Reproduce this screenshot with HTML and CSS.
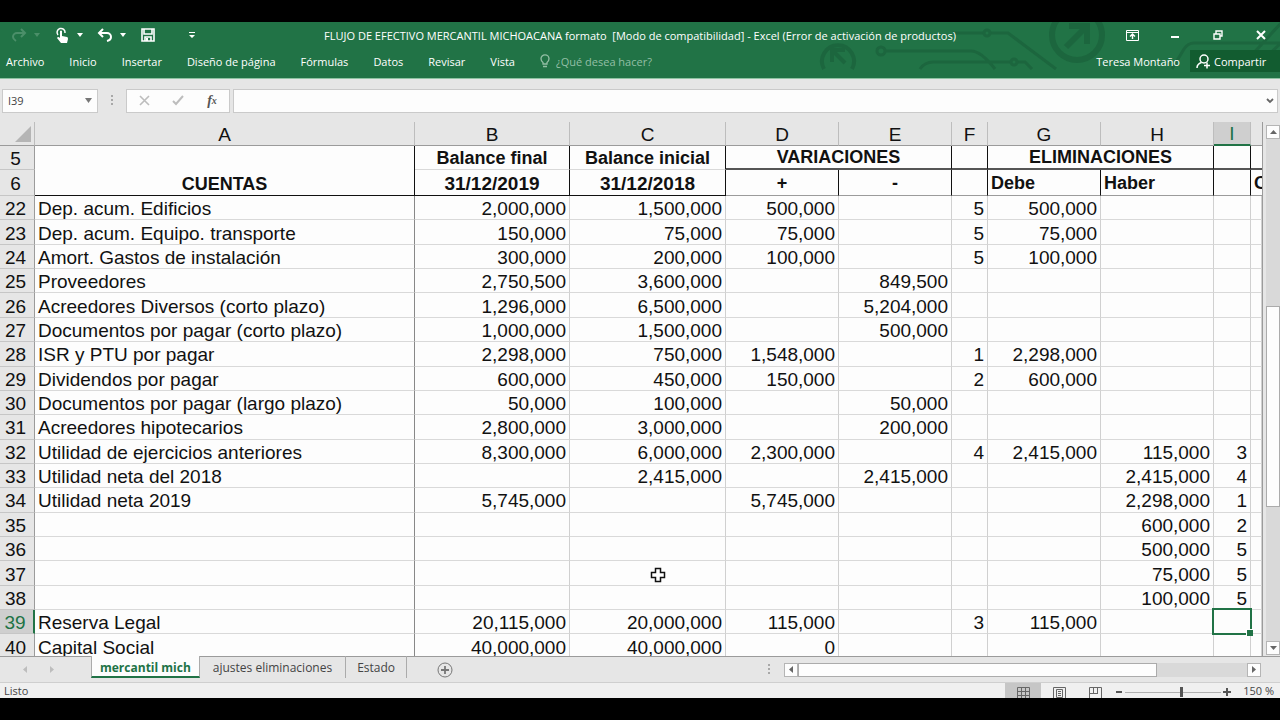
FILE: index.html
```html
<!DOCTYPE html>
<html lang="es">
<head>
    <meta charset="UTF-8">
    <title>FLUJO DE EFECTIVO MERCANTIL MICHOACANA - Excel</title>
    <link rel="stylesheet" href="styles.css">
</head>
<body>
<header class="ribbon">
    <svg class="circuit" width="470" height="48" viewBox="810 22 470 48" fill="none" stroke="#1c663e" stroke-width="3">
        <path d="M824 69a16 16 0 1 1 28 0" stroke-width="4"/>
        <path d="M845 63l-12-12M832 62V50h13" stroke-width="4"/>
        <path d="M953 33h31M991 33h17l48 36"/>
        <circle cx="987" cy="33" r="3"/>
        <circle cx="881" cy="51" r="4"/>
        <path d="M885 51h86q10 0 24 18M920 69q5-7 13-7h77M1017 62h8l7 7"/>
        <circle cx="1014" cy="62" r="3"/>
        <circle cx="1077" cy="35" r="25" stroke-width="6"/>
        <path d="M1066 47l20-20M1069 26h18v18" stroke-width="6"/>
        <path d="M1172 69l12-20q4-6 10-6h86M1238 70l44-48M1252 70l28-26"/>
    </svg>
    <div class="titlebar">
        <div class="quick">
            <button class="split off" aria-label="Rehacer">
                <svg class="ico" width="16" height="16" viewBox="0 0 16 16" fill="none" stroke="currentColor" stroke-width="2"><path d="M14 6H6a4 4 0 0 0-4 4q0 2 3 4M10 2l4 4-4 4"/></svg>
                <svg class="caret" width="6" height="4" viewBox="0 0 6 4"><path d="M0 0h6L3 4z"/></svg>
            </button>
            <button class="split" aria-label="Modo táctil">
                <svg class="ico" width="16" height="16" viewBox="0 0 16 16"><path d="M4 8a4 4 0 1 1 7-2" fill="none" stroke="currentColor" stroke-width="1.5"/><path d="M6 4q1-1 2 0v5l5 1q1 0 1 2l-1 4H7l-4-5q1-2 3 0z" fill="currentColor"/></svg>
                <svg class="caret" width="6" height="4" viewBox="0 0 6 4"><path d="M0 0h6L3 4z"/></svg>
            </button>
            <button class="split" aria-label="Deshacer">
                <svg class="ico" width="16" height="16" viewBox="0 0 16 16" fill="none" stroke="currentColor" stroke-width="2"><path d="M2 6h8a4 4 0 0 1 4 4q0 3-4 4M6 2L2 6l4 4"/></svg>
                <svg class="caret" width="6" height="4" viewBox="0 0 6 4"><path d="M0 0h6L3 4z"/></svg>
            </button>
            <button class="save" aria-label="Guardar">
                <svg width="14" height="14" viewBox="0 0 14 14"><path d="M1 1h12v12H1z M3 1v5h8V1 M4 13V9h6v4" fill="none" stroke="currentColor" stroke-width="1.6"/><path d="M5 10h2v3H5z" fill="currentColor"/></svg>
            </button>
            <button class="more" aria-label="Personalizar barra">
                <svg width="6" height="7" viewBox="0 0 6 7" fill="currentColor"><path d="M0 0h6v1H0zM0 3h6L3 6z"/></svg>
            </button>
        </div>
        <h1 class="title">FLUJO DE EFECTIVO MERCANTIL MICHOACANA formato&nbsp; [Modo de compatibilidad] - Excel (Error de activación de productos)</h1>
        <div class="window-buttons">
            <button aria-label="Opciones de cinta"><svg width="13" height="11" viewBox="0 0 13 11" fill="none" stroke="currentColor"><path d="M.5.5h12v10H.5zM1 2.500h11"/><path d="M6.500 9V4M4 6.500L6.500 4 9 6.500" stroke-width="1.400"/></svg></button>
            <button aria-label="Minimizar"><svg width="10" height="10" viewBox="0 0 10 10" fill="currentColor"><path d="M1 6h8v2H1z"/></svg></button>
            <button aria-label="Restaurar"><svg width="10" height="10" viewBox="0 0 10 10" fill="none" stroke="currentColor" stroke-width="1.400"><path d="M1 4h6v5H1zM3 4V1h6v5H7"/></svg></button>
            <button aria-label="Cerrar"><svg width="10" height="10" viewBox="0 0 10 10" stroke="currentColor" stroke-width="2"><path d="M1 1l8 8M9 1L1 9"/></svg></button>
        </div>
    </div>
    <div class="menu">
        <nav class="menu-tabs">
            <a href="#">Archivo</a>
            <a href="#">Inicio</a>
            <a href="#">Insertar</a>
            <a href="#">Diseño de página</a>
            <a href="#">Fórmulas</a>
            <a href="#">Datos</a>
            <a href="#">Revisar</a>
            <a href="#">Vista</a>
            <a href="#" class="tell">
                <svg width="10" height="14" viewBox="0 0 10 14" fill="none" stroke="currentColor" stroke-width="1.300"><path d="M3 10V8.500Q1 7 1 4.800a4 4 0 0 1 8 0Q9 7 7 8.500V10zM3 12.500h4"/></svg>
                ¿Qué desea hacer?
            </a>
        </nav>
        <div class="account">
            <span>Teresa Montaño</span>
            <button class="share">
                <svg width="15" height="15" viewBox="0 0 15 15" fill="none" stroke="currentColor" stroke-width="1.500"><circle cx="8" cy="5" r="4"/><path d="M1 14q0-4 4.500-5.500M8 11.500h6M11 8.500v6"/></svg>
                Compartir
            </button>
        </div>
    </div>
</header>

<div class="formula-bar">
    <div class="name-box">
        <input type="text" value="I39" aria-label="Cuadro de nombres">
        <button aria-label="Lista de nombres"><svg width="7" height="5" viewBox="0 0 7 5" fill="#777"><path d="M0 0h7L3.500 5z"/></svg></button>
    </div>
    <span class="dots"></span>
    <div class="fx-buttons">
        <button aria-label="Cancelar"><svg width="11" height="11" viewBox="0 0 11 11" stroke="#bdbdbd" stroke-width="1.600"><path d="M1 1l9 9M10 1l-9 9"/></svg></button>
        <button aria-label="Introducir"><svg width="12" height="11" viewBox="0 0 12 11" fill="none" stroke="#bdbdbd" stroke-width="2"><path d="M1 6l3 3 7-8"/></svg></button>
        <button class="fx" aria-label="Insertar función">f<sub>x</sub></button>
    </div>
    <div class="formula">
        <input type="text" aria-label="Barra de fórmulas">
        <button aria-label="Expandir barra"><svg width="8" height="6" viewBox="0 0 8 6" fill="none" stroke="#666" stroke-width="1.800"><path d="M1 1l3 3 3-3"/></svg></button>
    </div>
</div>

<main class="sheet">
    <div class="cells">
        <table>
            <colgroup>
                <col class="c-row"><col class="c-a"><col class="c-b"><col class="c-c"><col class="c-d"><col class="c-d"><col class="c-f"><col class="c-d"><col class="c-d"><col class="c-i"><col>
            </colgroup>
            <thead>
                <tr class="letters"><th class="corner"><svg width="16" height="16" viewBox="0 0 16 16" fill="#b5b5b5"><path d="M16 0v16H0z"/></svg></th><th>A</th><th>B</th><th>C</th><th>D</th><th>E</th><th>F</th><th>G</th><th>H</th><th class="on">I</th><th></th></tr>
                <tr class="frozen"><th scope="row">5</th><td rowspan="2" class="cuentas">CUENTAS</td><td class="soft">Balance final</td><td class="soft">Balance inicial</td><td colspan="2">VARIACIONES</td><td></td><td colspan="2">ELIMINACIONES</td><td></td><td></td></tr>
                <tr class="frozen last"><th scope="row">6</th><td class="dark">31/12/2019</td><td class="dark">31/12/2018</td><td>+</td><td>-</td><td></td><td class="left">Debe</td><td class="left">Haber</td><td></td><td class="left">C</td></tr>
            </thead>
            <tbody>
                <tr><th scope="row">22</th><td>Dep. acum. Edificios</td><td>2,000,000</td><td>1,500,000</td><td>500,000</td><td></td><td>5</td><td>500,000</td><td></td><td></td><td></td></tr>
                <tr><th scope="row">23</th><td>Dep. acum. Equipo. transporte</td><td>150,000</td><td>75,000</td><td>75,000</td><td></td><td>5</td><td>75,000</td><td></td><td></td><td></td></tr>
                <tr><th scope="row">24</th><td>Amort. Gastos de instalación</td><td>300,000</td><td>200,000</td><td>100,000</td><td></td><td>5</td><td>100,000</td><td></td><td></td><td></td></tr>
                <tr><th scope="row">25</th><td>Proveedores</td><td>2,750,500</td><td>3,600,000</td><td></td><td>849,500</td><td></td><td></td><td></td><td></td><td></td></tr>
                <tr><th scope="row">26</th><td>Acreedores Diversos (corto plazo)</td><td>1,296,000</td><td>6,500,000</td><td></td><td>5,204,000</td><td></td><td></td><td></td><td></td><td></td></tr>
                <tr><th scope="row">27</th><td>Documentos por pagar (corto plazo)</td><td>1,000,000</td><td>1,500,000</td><td></td><td>500,000</td><td></td><td></td><td></td><td></td><td></td></tr>
                <tr><th scope="row">28</th><td>ISR y PTU por pagar</td><td>2,298,000</td><td>750,000</td><td>1,548,000</td><td></td><td>1</td><td>2,298,000</td><td></td><td></td><td></td></tr>
                <tr><th scope="row">29</th><td>Dividendos por pagar</td><td>600,000</td><td>450,000</td><td>150,000</td><td></td><td>2</td><td>600,000</td><td></td><td></td><td></td></tr>
                <tr><th scope="row">30</th><td>Documentos por pagar (largo plazo)</td><td>50,000</td><td>100,000</td><td></td><td>50,000</td><td></td><td></td><td></td><td></td><td></td></tr>
                <tr><th scope="row">31</th><td>Acreedores hipotecarios</td><td>2,800,000</td><td>3,000,000</td><td></td><td>200,000</td><td></td><td></td><td></td><td></td><td></td></tr>
                <tr><th scope="row">32</th><td>Utilidad de ejercicios anteriores</td><td>8,300,000</td><td>6,000,000</td><td>2,300,000</td><td></td><td>4</td><td>2,415,000</td><td>115,000</td><td>3</td><td></td></tr>
                <tr><th scope="row">33</th><td>Utilidad neta del 2018</td><td></td><td>2,415,000</td><td></td><td>2,415,000</td><td></td><td></td><td>2,415,000</td><td>4</td><td></td></tr>
                <tr><th scope="row">34</th><td>Utilidad neta 2019</td><td>5,745,000</td><td></td><td>5,745,000</td><td></td><td></td><td></td><td>2,298,000</td><td>1</td><td></td></tr>
                <tr><th scope="row">35</th><td></td><td></td><td></td><td></td><td></td><td></td><td></td><td>600,000</td><td>2</td><td></td></tr>
                <tr><th scope="row">36</th><td></td><td></td><td></td><td></td><td></td><td></td><td></td><td>500,000</td><td>5</td><td></td></tr>
                <tr><th scope="row">37</th><td></td><td></td><td></td><td></td><td></td><td></td><td></td><td>75,000</td><td>5</td><td></td></tr>
                <tr><th scope="row">38</th><td></td><td></td><td></td><td></td><td></td><td></td><td></td><td>100,000</td><td>5</td><td></td></tr>
                <tr><th scope="row" class="on">39</th><td>Reserva Legal</td><td>20,115,000</td><td>20,000,000</td><td>115,000</td><td></td><td>3</td><td>115,000</td><td></td><td class="active"></td><td></td></tr>
                <tr><th scope="row">40</th><td>Capital Social</td><td>40,000,000</td><td>40,000,000</td><td>0</td><td></td><td></td><td></td><td></td><td></td><td></td></tr>
            </tbody>
        </table>
        <svg class="pointer" width="16" height="16" viewBox="0 0 16 16"><path d="M5.500 1.500h5v4h4v5h-4v4h-5v-4h-4v-5h4z" fill="#fff" stroke="#111" stroke-width="1.500"/></svg>
    </div>
    <div class="vscroll">
        <button aria-label="Subir"><svg width="7" height="4" viewBox="0 0 7 4"><path d="M0 4h7L3.500 0z"/></svg></button>
        <div class="vtrack"><div class="vthumb"></div></div>
        <button aria-label="Bajar"><svg width="7" height="4" viewBox="0 0 7 4"><path d="M0 0h7L3.500 4z"/></svg></button>
    </div>
</main>

<div class="tab-bar">
    <div class="tab-arrows">
        <button aria-label="Hoja anterior"><svg width="4" height="7" viewBox="0 0 4 7"><path d="M4 0v7L0 3.500z"/></svg></button>
        <button aria-label="Hoja siguiente"><svg width="4" height="7" viewBox="0 0 4 7"><path d="M0 0v7l4-3.500z"/></svg></button>
    </div>
    <nav class="sheet-tabs">
        <a href="#" class="selected">mercantil mich</a>
        <a href="#">ajustes eliminaciones</a>
        <a href="#">Estado</a>
    </nav>
    <button class="add" aria-label="Hoja nueva"><svg width="16" height="16" viewBox="0 0 16 16" fill="none" stroke="#777"><circle cx="8" cy="8" r="7"/><path d="M8 4v8M4 8h8" stroke-width="1.800"/></svg></button>
    <span class="dots"></span>
    <div class="hscroll">
        <button aria-label="Izquierda"><svg width="4" height="7" viewBox="0 0 4 7"><path d="M4 0v7L0 3.500z"/></svg></button>
        <div class="htrack"><div class="hthumb"></div></div>
        <button aria-label="Derecha"><svg width="4" height="7" viewBox="0 0 4 7"><path d="M0 0v7l4-3.500z"/></svg></button>
    </div>
</div>

<footer class="status">
    <span class="ready">Listo</span>
    <button class="view on" aria-label="Normal"><svg width="13" height="13" viewBox="0 0 13 13" fill="none" stroke="#666"><path d="M.5.5h12v12H.5zM4.500 0v13M8.500 0v13M0 4.500h13M0 8.500h13"/></svg></button>
    <button class="view" aria-label="Diseño de página"><svg width="13" height="13" viewBox="0 0 13 13" fill="none" stroke="#666"><path d="M.5.5h12v12H.5zM3.500 2.500h6v8h-6zM5 4.500h3M5 6.500h3M5 8.500h3"/></svg></button>
    <button class="view" aria-label="Salto de página"><svg width="13" height="13" viewBox="0 0 13 13" fill="none" stroke="#666"><path d="M.5 13V.5h12V13M4.500 0v6.500M8.500 0v6.500M0 6.500h9"/></svg></button>
    <button class="zoom" aria-label="Alejar"><svg width="8" height="8" viewBox="0 0 8 8" fill="#555"><path d="M1 3h6v2H1z"/></svg></button>
    <input type="range" min="0" max="100" value="59" aria-label="Zoom">
    <button class="zoom" aria-label="Acercar"><svg width="8" height="8" viewBox="0 0 8 8" fill="#555"><path d="M0 3h8v2H0zM3 0h2v8H3z"/></svg></button>
    <span class="percent">150 %</span>
</footer>
</body>
</html>
```
FILE: styles.css
```css
* {
    box-sizing: border-box;
    margin: 0;
    padding: 0;
}

body {
    display: flex;
    flex-direction: column;
    height: 100vh;
    padding: 22px 0;
    background: #000;
    font-family: "Open Sans", "Noto Sans", sans-serif;
    font-size: 11px;
    color: #444;
    overflow: hidden;
}

button {
    display: flex;
    align-items: center;
    justify-content: center;
    border: 0;
    background: none;
    font: inherit;
    color: inherit;
}

input {
    border: 0;
    background: none;
    font: inherit;
    color: inherit;
    outline: none;
}

a {
    color: inherit;
    text-decoration: none;
}

/* ribbon */
.ribbon {
    position: relative;
    background: #217346;
    border-bottom: 1px solid #8fc3a3;
    color: #fff;
    padding-bottom: 4px;
}

.circuit {
    position: absolute;
    top: 0;
    right: 0;
}

.titlebar {
    position: relative;
    display: grid;
    grid-template-columns: 1fr auto 1fr;
    align-items: center;
    height: 26px;
}

.quick {
    display: flex;
    align-items: center;
    gap: 7px;
    padding-left: 8px;
    height: 22px;
}

.split {
    width: 36px;
    justify-content: space-between;
    padding: 0 4px 0 3px;
}

.split.off {
    color: #4b8f69;
}

.caret {
    fill: currentColor;
}

.save {
    width: 22px;
}

.more {
    width: 16px;
    margin-left: 18px;
}

.title {
    font-size: 11px;
    font-weight: normal;
    white-space: nowrap;
}

.window-buttons {
    display: flex;
    justify-content: flex-end;
    gap: 19px;
    padding-right: 7px;
}

.window-buttons button {
    width: 24px;
    height: 22px;
}

.menu {
    position: relative;
    display: flex;
    justify-content: space-between;
    align-items: center;
    height: 26px;
}

.menu-tabs {
    display: flex;
    gap: 25px;
    padding-left: 6px;
    white-space: nowrap;
}

.tell {
    display: flex;
    align-items: center;
    gap: 6px;
    color: #93bfa5;
}

.account {
    display: flex;
    align-items: center;
    gap: 10px;
}

.share {
    justify-content: flex-start;
    gap: 3px;
    width: 90px;
    height: 22px;
    padding-left: 6px;
    background: #125c30;
}

/* formula bar */
.formula-bar {
    display: flex;
    align-items: center;
    height: 43px;
    padding: 0 2px 0 2px;
    background: #e6e6e6;
}

.name-box, .fx-buttons, .formula {
    display: flex;
    height: 24px;
    background: #fdfdfd;
    border: 1px solid #cacaca;
}

.name-box {
    width: 96px;
}

.name-box input {
    flex: 1;
    min-width: 0;
    padding-left: 5px;
}

.name-box button {
    width: 18px;
}

.dots {
    width: 2px;
    height: 11px;
    background: repeating-linear-gradient(#a8a8a8 0 2px, transparent 2px 4px);
}

.formula-bar .dots {
    margin: 0 13px;
}

.fx-buttons {
    width: 104px;
}

.fx-buttons button {
    flex: 1;
}

.fx {
    font: italic bold 14px "Liberation Serif", serif;
    color: #555;
}

.fx sub {
    font-size: 10px;
}

.formula {
    flex: 1;
    margin-left: 3px;
}

.formula input {
    flex: 1;
}

.formula button {
    width: 14px;
}

/* sheet */
.sheet {
    display: flex;
    flex: 1;
    min-height: 0;
    background: #e6e6e6;
}

.cells {
    position: relative;
    flex: 1;
    min-width: 0;
    overflow: hidden;
    background: #fdfdfd;
    border-right: 1px solid #9b9b9b;
}

/* the last row runs on under the sheet tabs */
table {
    width: 100%;
    height: calc(100% + 3px);
    table-layout: fixed;
    border-spacing: 0;
    font-family: "Liberation Sans", Arial, sans-serif;
    font-size: 19px;
    line-height: 21px;
    color: #111;
}

.c-row { width: 35px; }
.c-a { width: 380px; }
.c-b { width: 155px; }
.c-c { width: 156px; }
.c-d { width: 113px; }
.c-f { width: 36px; }
.c-i { width: 37px; }

th {
    background: #e6e6e6;
    border-right: 1px solid #9b9b9b;
    border-bottom: 1px solid #c6c6c6;
    font-weight: normal;
    text-align: center;
}

tr > th:first-child {
    padding-right: 3px;
}

td {
    border-right: 1px solid #d0d0d0;
    border-bottom: 1px solid #d9d9d9;
    padding: 0 3px;
    text-align: right;
    white-space: nowrap;
    overflow: hidden;
}

th, td {
    padding-top: 2px;
}

tbody td:nth-child(2) {
    text-align: left;
    border-right-color: #888;
}

.letters {
    height: 24px;
}

.letters th {
    border-right-color: #bdbdbd;
    border-bottom-color: #9b9b9b;
}

.letters th:last-child {
    border-right: 0;
}

.letters .corner {
    text-align: right;
    vertical-align: bottom;
    line-height: 0;
    padding-bottom: 3px;
}

th.on {
    background: #cfcfcf;
    color: #217346;
}

.letters th.on {
    padding-top: 1px;
    border-bottom: 2px solid #217346;
}

tbody th.on {
    border-right: 2px solid #217346;
}

.frozen {
    height: 24px;
}

.frozen.last {
    height: 26px;
}

.frozen td {
    padding-top: 1px;
    border-right-color: #111;
    border-bottom: 2px solid #555;
    font-size: 18px;
    font-weight: bold;
    text-align: center;
}

.frozen td.soft {
    padding-top: 2px;
    border-bottom: 1px solid #d9d9d9;
}

.frozen.last td {
    border-bottom: 1px solid #9b9b9b;
}

.frozen td.cuentas, .frozen td.dark {
    border-bottom: 1px solid #111;
}

.frozen td.dark {
    font-size: 19px;
}

.frozen td.cuentas {
    vertical-align: bottom;
}

.frozen td.left {
    text-align: left;
}

.frozen td:last-child {
    border-right: 0;
}

td.active {
    position: relative;
    overflow: visible;
}

td.active::before {
    content: "";
    position: absolute;
    inset: -2px -2px -2px -2px;
    border: 2px solid #217346;
}

td.active::after {
    content: "";
    position: absolute;
    right: -3px;
    bottom: -3px;
    width: 6px;
    height: 6px;
    background: #217346;
    border: 1px solid #fff;
    border-width: 1px 0 0 1px;
}

.pointer {
    position: absolute;
    left: 650px;
    top: 445px;
}

.vscroll, .hscroll {
    display: flex;
}

.vscroll {
    flex-direction: column;
    width: 17px;
    padding: 3px 0 1px 3px;
}

.vscroll button, .hscroll button {
    width: 14px;
    height: 14px;
    background: #fdfdfd;
    border: 1px solid #b5b5b5;
    fill: #666;
}

.vtrack {
    flex: 1;
    background: #d9d9d9;
}

.vthumb {
    height: 40%;
    margin-top: 167px;
    background: #fdfdfd;
    border: 1px solid #ababab;
}

/* sheet tabs */
.tab-bar {
    display: flex;
    align-items: center;
    height: 26px;
    padding-right: 19px;
    background: #e6e6e6;
    border-top: 1px solid #9b9b9b;
    font-size: 12px;
}

.tab-arrows {
    display: flex;
    width: 91px;
    padding-left: 11px;
    fill: #bdbdbd;
}

.tab-arrows button {
    width: 27px;
}

.sheet-tabs {
    display: flex;
    align-self: flex-start;
    height: 22px;
    margin-top: -1px;
    line-height: 24px;
    white-space: nowrap;
}

.sheet-tabs a {
    padding: 0 11px;
    border-right: 1px solid #ababab;
}

.sheet-tabs a:nth-child(2) {
    padding: 0 13px;
}

.sheet-tabs .selected {
    padding: 0 8px;
    border-left: 1px solid #ababab;
    border-bottom: 2px solid #217346;
    background: #fdfdfd;
    color: #217346;
    font-weight: bold;
}

.add {
    margin-left: 30px;
}

.tab-bar .dots {
    margin: 0 14px 0 auto;
}

.hscroll {
    width: 477px;
}

.htrack {
    flex: 1;
    background: #d9d9d9;
}

.hthumb {
    width: 80%;
    height: 14px;
    background: #fdfdfd;
    border: 1px solid #ababab;
}

/* status bar */
.status {
    display: flex;
    align-items: flex-start;
    height: 16px;
    padding: 0 6px 0 4px;
    background: #f0f0f0;
    border-top: 1px solid #cfcfcf;
    line-height: 15px;
    overflow: hidden;
    white-space: nowrap;
}

.ready {
    margin-right: auto;
}

.view {
    width: 36px;
    height: 20px;
}

.view.on {
    background: #c6c6c6;
}

.zoom {
    width: 12px;
    height: 18px;
}

.status input {
    appearance: none;
    width: 96px;
    height: 18px;
    background: linear-gradient(#b0b0b0, #b0b0b0) center / 100% 1px no-repeat;
}

.status input::-webkit-slider-thumb {
    appearance: none;
    width: 3px;
    height: 10px;
    background: #555;
}

.percent {
    margin-left: 10px;
}
```
